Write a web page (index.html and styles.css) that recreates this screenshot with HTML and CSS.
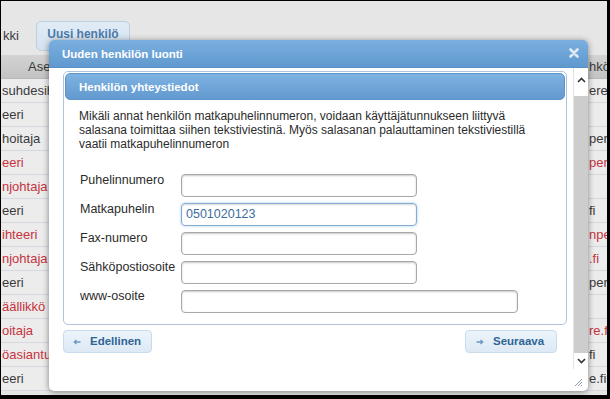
FILE: index.html
```html
<!DOCTYPE html>
<html lang="fi">
<head>
<meta charset="utf-8">
<title>Uuden henkilön luonti</title>
<link rel="stylesheet" href="styles.css">
</head>
<body>
<div class="frame">
  <div class="topbar">
    <span class="crumb">kki</span>
    <span class="tab">Uusi henkilö</span>
  </div>
  <div class="grid">
    <div class="row head"><div class="c1">Ase</div><div class="c2"></div><div class="c3">hkö</div></div>
    <div class="row"><div class="c1">suhdesih</div><div class="c2"></div><div class="c3">ere.</div></div>
    <div class="row"><div class="c1">eeri</div><div class="c2"></div><div class="c3"></div></div>
    <div class="row"><div class="c1">hoitaja</div><div class="c2"></div><div class="c3">per</div></div>
    <div class="row red"><div class="c1">eeri</div><div class="c2"></div><div class="c3">pere</div></div>
    <div class="row red"><div class="c1">njohtaja</div><div class="c2"></div><div class="c3"></div></div>
    <div class="row"><div class="c1">eeri</div><div class="c2"></div><div class="c3">fi</div></div>
    <div class="row red"><div class="c1">ihteeri</div><div class="c2"></div><div class="c3">npe</div></div>
    <div class="row red"><div class="c1">njohtaja</div><div class="c2"></div><div class="c3">.fi</div></div>
    <div class="row"><div class="c1">eeri</div><div class="c2"></div><div class="c3">pere</div></div>
    <div class="row red"><div class="c1">äällikkö</div><div class="c2"></div><div class="c3"></div></div>
    <div class="row red"><div class="c1">oitaja</div><div class="c2"></div><div class="c3">re.fi</div></div>
    <div class="row red"><div class="c1">öasiantu</div><div class="c2"></div><div class="c3 dark">fi</div></div>
    <div class="row"><div class="c1">eeri</div><div class="c2"></div><div class="c3">e.fi</div></div>
  </div>

  <div class="dialog">
    <div class="dlg-head">
      <span class="dlg-title">Uuden henkilön luonti</span>
      <svg class="dlg-close" width="10" height="10" viewBox="0 0 10 10"><path d="M1.5 1.5 L8.5 8.5 M8.5 1.5 L1.5 8.5" stroke="#dde9f5" stroke-width="2.6" stroke-linecap="round"/></svg>
    </div>
    <div class="dlg-body">
      <div class="dlg-main">
        <div class="fieldset">
          <div class="legend">Henkilön yhteystiedot</div>
          <p class="info">Mikäli annat henkilön matkapuhelinnumeron, voidaan käyttäjätunnukseen liittyvä<br>salasana toimittaa siihen tekstiviestinä. Myös salasanan palauttaminen tekstiviestillä<br>vaatii matkapuhelinnumeron</p>
          <div class="form">
            <label class="lbl">Puhelinnumero</label><span class="input"></span>
            <label class="lbl">Matkapuhelin</label><span class="input focus">0501020123</span>
            <label class="lbl">Fax-numero</label><span class="input"></span>
            <label class="lbl">Sähköpostiosoite</label><span class="input"></span>
            <label class="lbl">www-osoite</label><span class="input wide"></span>
          </div>
        </div>
        <div class="buttons">
          <span class="btn"><svg class="arr" width="8" height="6" viewBox="0 0 8 6"><path d="M7.5 3 H1.5 M3.5 1 L1.2 3 L3.5 5" fill="none" stroke="#6b98c6" stroke-width="1.3"/></svg>Edellinen</span>
          <span class="btn"><svg class="arr" width="8" height="6" viewBox="0 0 8 6"><path d="M0.5 3 H6.5 M4.5 1 L6.8 3 L4.5 5" fill="none" stroke="#6b98c6" stroke-width="1.3"/></svg>Seuraava</span>
        </div>
      </div>
      <div class="scrollbar">
        <div class="sb-up"><svg width="9" height="6" viewBox="0 0 9 6"><path d="M1 5 L4.5 1.5 L8 5" fill="none" stroke="#333" stroke-width="1.6"/></svg></div>
        <div class="sb-thumb"></div>
        <div class="sb-down"><svg width="9" height="6" viewBox="0 0 9 6"><path d="M1 1 L4.5 4.5 L8 1" fill="none" stroke="#333" stroke-width="1.6"/></svg></div>
      </div>
    </div>
    <div class="dlg-foot">
      <svg class="grip" width="9" height="9" viewBox="0 0 9 9"><path d="M8 1 L1 8 M8 4 L4 8 M8 7 L7 8" stroke="#8a9bb0" stroke-width="1"/></svg>
    </div>
  </div>
</div>
</body>
</html>
```
FILE: styles.css
```css
* { box-sizing: border-box; }
html, body { margin: 0; padding: 0; }
body { width: 610px; height: 399px; overflow: hidden; font-family: "Liberation Sans", Arial, sans-serif; }

.frame {
  position: relative;
  width: 610px;
  height: 399px;
  border-style: solid;
  border-color: #000;
  border-width: 1px 3px 4px 1px;
  background: #e6e6e6;
  overflow: hidden;
}

.topbar {
  height: 54px;
  display: flex;
  align-items: flex-start;
  padding-top: 20px;
  font-size: 13px;
}
.crumb { margin-top: 7px; margin-left: 2px; color: #3a3a3a; }
.tab {
  margin-left: 17px;
  width: 94px;
  height: 30px;
  padding-top: 5px;
  text-align: center;
  font-size: 12px;
  font-weight: bold;
  color: #4b7bab;
  background: linear-gradient(#e0ebf5, #d4e3f1);
  border: 1px solid #bcd0e3;
  border-radius: 5px;
}

.grid { font-size: 13px; color: #3a3a3a; }
.row {
  display: grid;
  grid-template-columns: 47px 1fr 20px;
  height: 24px;
  line-height: 23px;
  background: #ececec;
  border-bottom: 1px solid #d3d8de;
}
.row.head {
  background: linear-gradient(#d3d3d3, #c3c3c3);
  border-bottom: 1px solid #b8b8b8;
}
.row.head .c1 { padding-left: 27px; }
.row.red .c1, .row.red .c3 { color: #c5343e; }
.row .c3.dark { color: #3a3a3a; }
.c1, .c3 { white-space: nowrap; }
.c1 { padding-left: 1px; }
.c3 { padding-left: 2px; }

.dialog {
  position: absolute;
  left: 48px;
  top: 39px;
  width: 539px;
  height: 351px;
  background: #fff;
  border-radius: 5px;
  box-shadow: 0 1px 6px rgba(0,0,0,0.45);
  display: flex;
  flex-direction: column;
  overflow: hidden;
}
.dlg-head {
  height: 28px;
  flex: none;
  display: flex;
  align-items: center;
  justify-content: space-between;
  padding: 1px 9px 0 13px;
  background: linear-gradient(#7aafdf, #6099cf);
  border-bottom: 1px solid #5b92c6;
}
.dlg-title { color: #fff; font-weight: bold; font-size: 11.5px; }
.dlg-close { margin-top: -3px; }

.dlg-body { flex: 1; display: flex; }
.dlg-main { flex: 1; padding: 3px 6px 0 14px; }
.fieldset {
  border: 1px solid #aec4da;
  border-radius: 5px;
  padding: 1px 1px 11px;
}
.legend {
  height: 27px;
  line-height: 27px;
  padding-left: 13px;
  border-radius: 5px;
  border: 1px solid #5d95cb;
  background: linear-gradient(#7eb3e2, #6399cf);
  color: #fff;
  font-weight: bold;
  font-size: 11.5px;
}
.info {
  margin: 9px 0 0 14px;
  font-size: 12px;
  line-height: 14px;
  color: #2b2b2b;
}
.form {
  margin: 23px 0 0 15px;
  display: grid;
  grid-template-columns: 101px auto;
  justify-content: start;
  align-items: start;
  row-gap: 6px;
}
.lbl { font-size: 12.5px; line-height: 13px; color: #2b2b2b; }
.input {
  display: block;
  width: 236px;
  height: 23px;
  border: 1px solid #a8a8a8;
  border-radius: 4px;
  box-shadow: inset 0 1px 2px rgba(0,0,0,0.22);
  font-size: 12.5px;
  line-height: 21px;
  padding-left: 4px;
  color: #3d6e9c;
}
.input.focus {
  border-color: #86acd2;
  box-shadow: 0 0 3px #a9cbee, inset 0 1px 2px rgba(0,0,0,0.15);
}
.input.wide { width: 337px; }

.buttons {
  display: flex;
  justify-content: space-between;
  margin-top: 5px;
  padding-right: 10px;
}
.btn {
  height: 23px;
  line-height: 21px;
  border: 1px solid #c8dcee;
  border-radius: 4px;
  background: linear-gradient(#ecf4fb, #dde9f5);
  color: #2f6496;
  font-weight: bold;
  font-size: 11.5px;
  display: flex;
  align-items: center;
  gap: 9px;
}
.btn:first-child { width: 89px; padding-left: 9px; }
.btn:last-child { width: 92px; padding-left: 10px; }

.scrollbar {
  width: 15px;
  display: flex;
  flex-direction: column;
  border-left: 1px solid #e2e2e2;
}
.sb-up { height: 28px; display: flex; justify-content: center; padding-top: 9px; }
.sb-thumb { flex: 1; background: #cdcdcd; }
.sb-down { height: 16px; display: flex; justify-content: center; align-items: center; }

.dlg-foot { height: 22px; flex: none; display: flex; justify-content: flex-end; align-items: flex-end; padding: 0 5px 4px 0; }
```
